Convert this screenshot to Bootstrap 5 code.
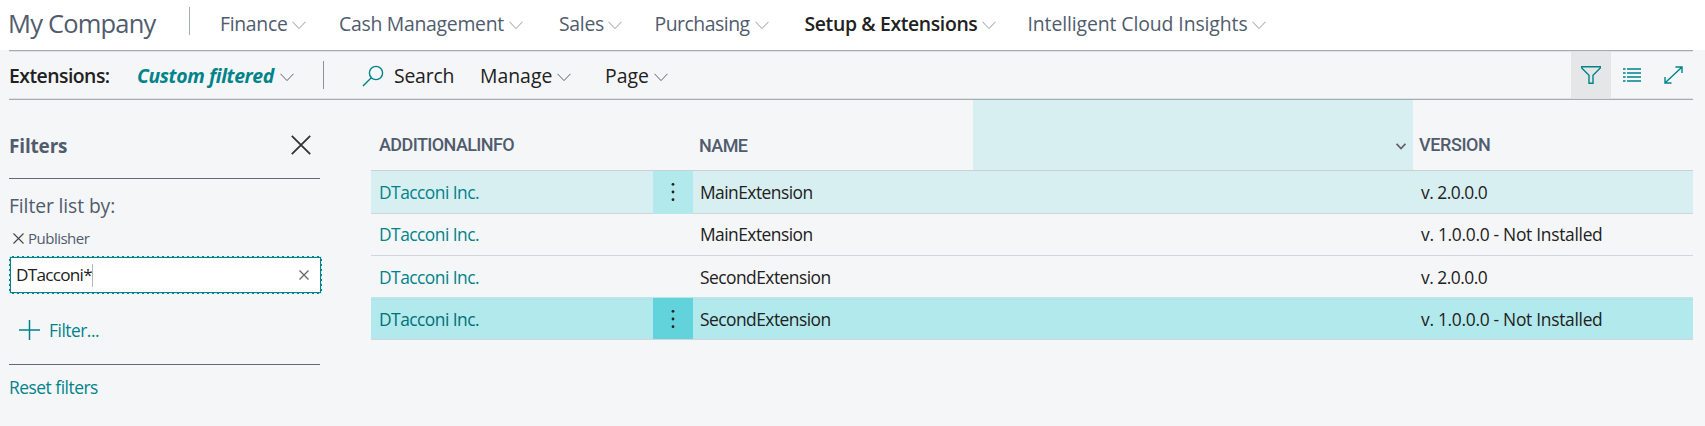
<!DOCTYPE html>
<html lang="en">
<head>
<meta charset="utf-8">
<meta name="viewport" content="width=device-width, initial-scale=1">
<title>Extensions - My Company</title>
<link href="https://cdn.jsdelivr.net/npm/bootstrap@5.3.0/dist/css/bootstrap.min.css" rel="stylesheet">
<style>
:root{--slate:#505c6d;--teal:#00838a;--ink:#212121;--line:#a6acb4;--soft:#d8eff1;--mid:#b2e9ec;--strong:#63d3db}
body{font-family:"Open Sans","Noto Sans",sans-serif;background:#f5f6f8;color:var(--ink);white-space:nowrap;overflow:hidden;height:426px}
a{text-decoration:none;color:inherit}
svg{display:block;flex:none;fill:none;stroke:currentColor}
.topbar{height:50px;background:#fff;color:var(--slate);padding-left:9px;font-size:19.4px;line-height:48px}
.company{font-size:25.5px;letter-spacing:-.8px;line-height:47px;width:180px;margin-left:-1px}
.rule-v{width:1px;height:28px;background:var(--line);flex:none}
.top-rule{margin:7px 30px 0 1px}
.bar-rule{margin:9px 0 0 1px;background:#8c9299}
.menu{display:flex;flex:none}
.menu svg{margin-top:21px;color:#929aa6}
.menu.active{font-weight:600;color:var(--ink)}
.m1{width:119px;letter-spacing:-.31px}.m1 span{width:72px}
.m2{width:220px;letter-spacing:-.28px}.m2 span{width:170px}
.m3{width:95.5px;letter-spacing:-.3px}.m3 span{width:49px}
.m4{width:150px;letter-spacing:-.49px}.m4 span{width:100.500px}
.m5{width:223px;letter-spacing:-.36px}.m5 span{width:177.500px}
.m6{letter-spacing:-.1px}.m6 span{width:224px}
.toolbar{height:50px;margin:0 12px 0 9px;border-top:1px solid var(--line);border-bottom:1px solid var(--line);box-shadow:inset 0 1px #dfe2e6,inset 0 -1px #dfe2e6;font-size:19.4px;line-height:48px;padding-top:1px}
.toolbar .menu svg{margin-top:21px;color:#606367}
.caption-label{width:128px;font-weight:600;letter-spacing:-.53px}
.view-name{font-weight:700;font-style:italic;color:var(--teal);width:185px;letter-spacing:-.38px}.view-name span{width:143px}
.search-icon{margin:13px 10px 0 38px;color:var(--teal)}
.t1{width:86px;letter-spacing:-.2px}
.t2{width:125px}.t2 span{width:77px}
.t3 span{width:49px}
.tool-icon{width:40px;height:46px;color:var(--teal);display:flex;align-items:center;justify-content:center}
.tool-icon.on{background:#e5e6e8}
.tool-icon.wide{width:42px}
.filters{width:371px;padding-left:9px;flex:none;color:var(--slate)}
.filters-head{height:79px;width:311px;padding-top:26px;border-bottom:1px solid #66696d;font-size:19px;font-weight:700;letter-spacing:-.17px;line-height:41px}
.filters-head svg{margin:9px 9px 0 0;color:#333}
.by{font-size:19.3px;letter-spacing:-.1px;line-height:31px;margin-top:11px}
.field-name{font-size:15px;letter-spacing:-.5px;line-height:20px;margin-top:7px}
.field-name svg{margin:0 4px 0 4px;color:#444}
.field-box{width:313px;height:38px;border:1px solid var(--teal);outline:1px dashed #d5ecee;outline-offset:-1px;background:#fff;box-shadow:inset 0 0 0 1px var(--teal);color:var(--ink);font-size:17.2px;letter-spacing:-.75px;margin-top:8px;padding-left:6px}
.field-box>svg{margin-right:12px;color:#666}
.caret{width:1px;height:23px;background:#b5b8bb}
.add{height:71px;width:311px;border-bottom:1px solid #66696d;color:var(--teal);font-size:17.3px;letter-spacing:-.45px;padding:18px 0 0 10px;line-height:38px}
.add svg{margin:8px 9px 0 0}
.reset{font-size:17.4px;letter-spacing:-.49px;line-height:30px;color:var(--teal);margin-top:7px}
.grid-list{width:1322px;flex:none}
.line{display:grid;grid-template-columns:282px 40px 720px 280px}
.heads{height:71px;grid-template-columns:322px 280px 440px 280px;border-bottom:1px solid #cbd0d5;color:var(--slate);font:500 18px/22px Roboto,sans-serif}
.heads>div{padding-top:34px}
.heads .h1c{padding-left:8px;letter-spacing:-.6px}
.heads .h2c{padding:35px 0 0 6px;letter-spacing:-.6px}
.heads .h3c{background:var(--soft);padding:43px 7px 0 0;color:#5d6266}
.heads .h4c{padding-left:6px;letter-spacing:-.4px}
.rec{height:42.5px;line-height:42.500px;font-size:17.4px;letter-spacing:-.53px;border-bottom:1px solid #d2d5d9}
.rec>:nth-child(1){color:var(--teal);padding-left:8px}
.rec>:nth-child(3){padding-left:7px}
.rec>:nth-child(4){padding-left:8px;letter-spacing:-.29px}
.rec>.ver-short{letter-spacing:-.5px}
.rec.upper{line-height:41px}
.dots{display:flex;align-items:center;justify-content:center}
.rec.hover{background:var(--soft)}.hover .dots{background:var(--mid)}
.rec.chosen{background:var(--mid);box-shadow:0 -2px var(--mid);line-height:38.500px;height:41px;border-top:1px solid #c5d8db}.chosen .dots{background:var(--strong);box-shadow:0 -2px var(--strong)}
.rec.chosen>:first-child{color:#007178}
</style>
</head>
<body>
<svg width="0" height="0" class="position-absolute"><defs>
<symbol id="chev" viewBox="0 0 14 9"><path d="M.5 .8 7 7.6 13.500 .8"/></symbol>
<symbol id="dots" viewBox="0 0 4 20"><g fill="#212121" stroke="none"><circle cx="2" cy="2.300" r="1.400"/><circle cx="2" cy="10" r="1.400"/><circle cx="2" cy="17.700" r="1.400"/></g></symbol>
</defs></svg>

<nav class="topbar d-flex">
  <a class="company" href="#">My Company</a>
  <div class="rule-v top-rule"></div>
  <a class="menu m1" href="#"><span>Finance</span><svg width="14" height="9"><use href="#chev"/></svg></a>
  <a class="menu m2" href="#"><span>Cash Management</span><svg width="14" height="9"><use href="#chev"/></svg></a>
  <a class="menu m3" href="#"><span>Sales</span><svg width="14" height="9"><use href="#chev"/></svg></a>
  <a class="menu m4" href="#"><span>Purchasing</span><svg width="14" height="9"><use href="#chev"/></svg></a>
  <a class="menu m5 active" href="#"><span>Setup &amp; Extensions</span><svg width="14" height="9"><use href="#chev"/></svg></a>
  <a class="menu m6" href="#"><span>Intelligent Cloud Insights</span><svg width="14" height="9"><use href="#chev"/></svg></a>
</nav>

<div class="toolbar d-flex">
  <div class="caption-label">Extensions:</div>
  <a class="menu view-name" href="#"><span>Custom filtered</span><svg width="14" height="9"><use href="#chev"/></svg></a>
  <div class="rule-v bar-rule"></div>
  <svg class="search-icon" width="22" height="22" stroke-width="1.400"><circle cx="14" cy="8" r="6.600"/><path d="M9.300 12.700 1 21"/></svg>
  <a class="t1" href="#">Search</a>
  <a class="menu t2" href="#"><span>Manage</span><svg width="14" height="9"><use href="#chev"/></svg></a>
  <a class="menu t3" href="#"><span>Page</span><svg width="14" height="9"><use href="#chev"/></svg></a>
  <div class="d-flex ms-auto">
    <a class="tool-icon on" href="#"><svg width="20" height="18" stroke-width="1.400"><path d="M.7 .8H19.300V2L12 9.300V17.200H8V9.300L.7 2Z"/></svg></a>
    <a class="tool-icon wide" href="#"><svg width="18" height="14" stroke-width="1.400"><path d="M0 1H2.600M4 1H18M0 5H2.600M4 5H18M0 9H2.600M4 9H18M0 13H2.600M4 13H18"/></svg></a>
    <a class="tool-icon" href="#"><svg width="19" height="18" stroke-width="1.400"><path d="M1.200 16.800 17.800 1.200M11.500 1H18V7M1 11V17H7.500"/></svg></a>
  </div>
</div>

<main class="d-flex">
  <aside class="filters">
    <div class="filters-head d-flex justify-content-between"><span>Filters</span><svg width="20" height="20" stroke-width="1.800"><path d="M.8 .8 19.200 19.200M19.200 .8 .8 19.200"/></svg></div>
    <div class="by">Filter list by:</div>
    <div class="field-name d-flex align-items-center"><svg width="11" height="11" stroke-width="1.100"><path d="M.5 .5 10.500 10.500M10.500 .5 .5 10.500"/></svg><span>Publisher</span></div>
    <div class="field-box d-flex align-items-center"><span>DTacconi*</span><div class="caret"></div><svg class="ms-auto" width="10" height="10" stroke-width="1.300"><path d="M.5 .5 9.500 9.500M9.500 .5 .5 9.500"/></svg></div>
    <div class="add d-flex"><svg width="21" height="20" stroke-width="1.500"><path d="M0 10H21M10.500 0V20"/></svg><a href="#">Filter...</a></div>
    <div class="reset"><a href="#">Reset filters</a></div>
  </aside>

  <section class="grid-list">
    <div class="line heads">
      <div class="h1c">ADDITIONALINFO</div>
      <div class="h2c">NAME</div>
      <div class="h3c d-flex justify-content-end"><svg width="10" height="7" stroke-width="1.700"><path d="M.6 .8 5 5.500 9.400 .8"/></svg></div>
      <div class="h4c">VERSION</div>
    </div>
    <div class="line rec hover"><a href="#">DTacconi Inc.</a><div class="dots"><svg width="4" height="20"><use href="#dots"/></svg></div><div>MainExtension</div><div class="ver-short">v. 2.0.0.0</div></div>
    <div class="line rec upper"><a href="#">DTacconi Inc.</a><div></div><div>MainExtension</div><div>v. 1.0.0.0 - Not Installed</div></div>
    <div class="line rec"><a href="#">DTacconi Inc.</a><div></div><div>SecondExtension</div><div class="ver-short">v. 2.0.0.0</div></div>
    <div class="line rec chosen"><a href="#">DTacconi Inc.</a><div class="dots"><svg width="4" height="20"><use href="#dots"/></svg></div><div>SecondExtension</div><div>v. 1.0.0.0 - Not Installed</div></div>
  </section>
</main>
<script src="https://cdn.jsdelivr.net/npm/bootstrap@5.3.0/dist/js/bootstrap.bundle.min.js"></script>
</body>
</html>
